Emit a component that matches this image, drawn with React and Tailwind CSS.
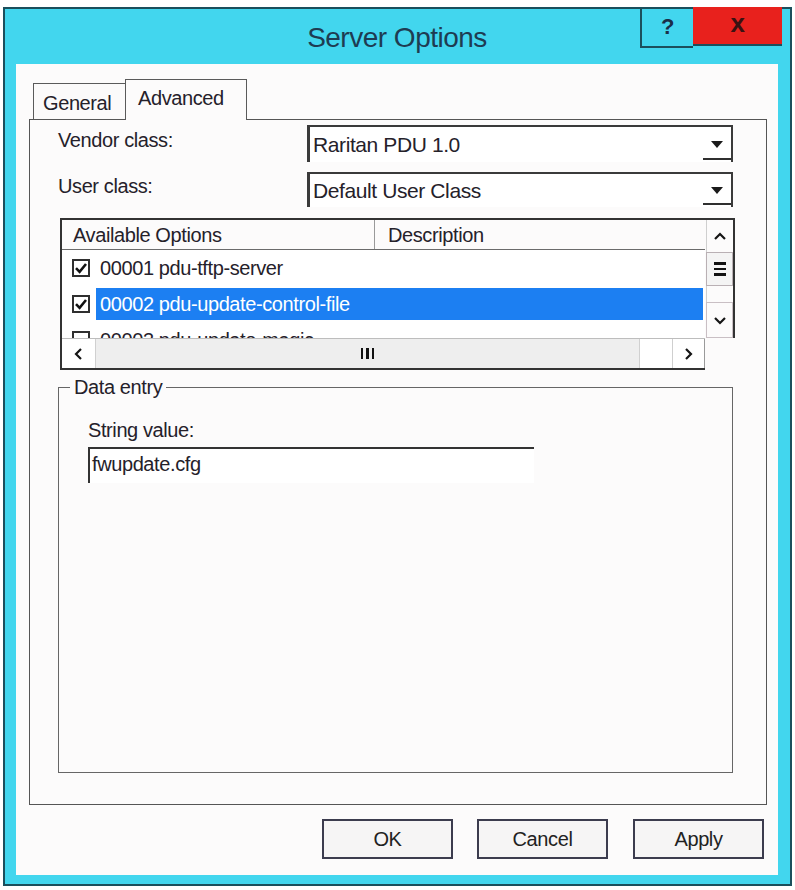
import React from 'react';

const Check = ({ checked }) => (
  <svg width="18" height="18" viewBox="0 0 18 18" className="shrink-0">
    <rect x="1" y="1" width="16" height="16" fill="#fff" stroke="#2f2f2f" strokeWidth="2" />
    {checked && (
      <path d="M4 9.2 L7.6 12.8 L14 5" fill="none" stroke="#111" strokeWidth="2.6" />
    )}
  </svg>
);

const Combo = ({ value, h }) => (
  <div className={`${h} w-[426px] bg-white border-l-[3px] border-t-2 border-r-2 border-[#3a3a3a] flex items-stretch`}>
    <span className="pl-[3px] self-center text-[21px]">{value}</span>
    <div className="ml-auto w-[28px] flex flex-col">
      <div className="flex-1 flex items-center justify-center pt-[4px]">
        <svg width="12" height="7" viewBox="0 0 12 7">
          <polygon points="0,0 12,0 6,7" fill="#1a1a1a" />
        </svg>
      </div>
      <div className="h-[2px] bg-[#2f2f2f] mb-[2px]" />
    </div>
  </div>
);

const Chevron = ({ dir }) => {
  const d = {
    up: 'M2 8 L7 3 L12 8',
    down: 'M2 3 L7 8 L12 3',
    left: 'M8 2 L3 7 L8 12',
    right: 'M3 2 L8 7 L3 12',
  }[dir];
  const vert = dir === 'up' || dir === 'down';
  return (
    <svg width={vert ? 14 : 11} height={vert ? 11 : 14} viewBox={vert ? '0 0 14 11' : '0 0 11 14'}>
      <path d={d} fill="none" stroke="#151515" strokeWidth="2.2" />
    </svg>
  );
};

const OptionsList = () => (
  <div className="ml-[2px] mt-[11px] w-[675px] h-[152px] border-l-2 border-t-2 border-[#333] flex flex-col">
    <div className="flex h-[118px]">
      <div className="w-[643px] flex flex-col">
        {/* header */}
        <div className="h-[30px] flex border-b border-[#6b6b6b] shrink-0">
          <div className="w-[313px] border-r border-[#9a9a9a] pl-[11px] flex items-center">Available Options</div>
          <div className="pl-[13px] flex items-center">Description</div>
        </div>
        {/* rows */}
        <div className="flex-1 overflow-hidden bg-white">
          <div className="h-[36px] flex items-center pl-[10px]">
            <Check checked />
            <span className="ml-[10px]">00001 pdu-tftp-server</span>
          </div>
          <div className="h-[36px] flex items-center pl-[10px]">
            <Check checked />
            <div className="ml-[6px] mr-[2px] flex-1 h-[32px] bg-[#1c7ff2] text-white pl-[4px] flex items-center">
              00002 pdu-update-control-file
            </div>
          </div>
          <div className="h-[36px] flex items-center pl-[10px]">
            <Check />
            <span className="ml-[10px]">00003 pdu-update-magic</span>
          </div>
        </div>
      </div>
      {/* vertical scrollbar */}
      <div className="w-[30px] border-r-2 border-[#333] flex flex-col pl-[1px]">
        <div className="h-[32px] border-l border-[#cfcfcf] flex items-center justify-center">
          <Chevron dir="up" />
        </div>
        <div className="h-[34px] border border-[#b9b0b4] bg-[#f4f4f4] flex flex-col items-center justify-center gap-[3px]">
          <div className="w-[12px] h-[2.5px] bg-[#111]" />
          <div className="w-[12px] h-[2.5px] bg-[#111]" />
          <div className="w-[12px] h-[2.5px] bg-[#111]" />
        </div>
        <div className="h-[16px] border-l border-[#cfcfcf]" />
        <div className="flex-1 border border-[#c9bfc4] flex items-center justify-center">
          <Chevron dir="down" />
        </div>
      </div>
    </div>
    {/* horizontal scrollbar */}
    <div className="flex h-[32px]">
      <div className="w-[643px] flex border-t border-b-2 border-t-[#bdbdbd] border-b-[#333]">
        <div className="w-[33px] flex items-center justify-center bg-white">
          <Chevron dir="left" />
        </div>
        <div className="w-[545px] bg-[#eeeeee] border-x border-[#d0d0d0] flex items-center justify-center">
          <div className="flex gap-[3px]">
            <div className="w-[2.5px] h-[11px] bg-[#111]" />
            <div className="w-[2.5px] h-[11px] bg-[#111]" />
            <div className="w-[2.5px] h-[11px] bg-[#111]" />
          </div>
        </div>
        <div className="w-[33px] bg-white border-r border-[#cfcfcf]" />
        <div className="flex-1 flex items-center justify-center bg-white border-r border-[#9a9a9a]">
          <Chevron dir="right" />
        </div>
      </div>
    </div>
  </div>
);

const DialogButton = ({ children }) => (
  <button className="w-[131px] h-[40px] border-2 border-[#3c3c4e] bg-[#f6f5f5] flex items-center justify-center text-[#222]">
    {children}
  </button>
);

export default function App() {
  return (
    <div
      className="w-[795px] h-[890px] bg-white pt-[7px] pl-[3px] text-[20px] tracking-[-0.4px] text-[#25212a]"
      style={{ fontFamily: '"Liberation Sans", Arial, sans-serif' }}
    >
      <div className="w-[789px] h-[879px] border-2 border-[#1b4f5c] bg-[#42d6ee] flex flex-col pl-[11px] pr-[12px] pb-[9px]">
        {/* title bar */}
        <div className="h-[55px] shrink-0 grid grid-cols-[1fr_auto_1fr]">
          <div />
          <div className="flex items-center pt-[3px] text-[28px] tracking-[-0.5px] text-[#1e3c52]">Server Options</div>
          <div className="flex justify-end items-start -mt-[2px] -mr-[4px]">
            <div className="w-[53px] h-[41px] border-l-2 border-b-2 border-[#1b4f5c] flex items-center justify-center text-[22px] font-bold text-[#1a2f48]">
              ?
            </div>
            <div className="w-[89px] h-[39px] bg-[#e8211d] border-b-2 border-[#1b4f5c] flex items-center justify-center text-[26px] font-bold text-[#3a1212] pb-[4px]">
              x
            </div>
          </div>
        </div>

        {/* content */}
        <div className="flex-1 bg-[#fcfbfb] flex flex-col pt-[15px] pl-[13px] pr-[11px]">
          {/* tabs */}
          <div className="h-[40px] flex items-end pl-[4px] shrink-0">
            <div className="w-[92px] h-[36px] border-l border-t border-[#5a5a5a] flex items-center pl-[9px] pt-[2px] bg-[#fbfafa]">
              General
            </div>
            <div className="relative z-10 w-[122px] h-[41px] -mb-px border-l border-t border-r border-[#5a5a5a] bg-[#fcfbfb] flex items-start pl-[12px] pt-[3px]">
              Advanced
            </div>
          </div>

          {/* tab panel */}
          <div className="h-[686px] border border-[#555] pl-[28px] flex flex-col shrink-0">
            <div className="mt-[5px] flex items-center">
              <div className="w-[249px] -mt-[7px]">Vendor class:</div>
              <Combo value="Raritan PDU 1.0" h="h-[37px]" />
            </div>
            <div className="mt-[10px] flex items-center">
              <div className="w-[249px] -mt-[8px]">User class:</div>
              <Combo value="Default User Class" h="h-[35px]" />
            </div>

            <OptionsList />

            <fieldset className="mt-[5px] w-[675px] h-[398px] border border-[#666] pl-[29px]">
              <legend className="ml-[-18px] px-[4px] leading-[24px]">Data entry</legend>
              <div className="mt-[19px] leading-[24px]">String value:</div>
              <div className="mt-[5px] w-[446px] h-[36px] border-l-2 border-t-2 border-[#333] bg-white flex items-center pl-[2px] pb-[4px]">
                fwupdate.cfg
              </div>
            </fieldset>
          </div>

          {/* buttons */}
          <div className="mt-[14px] flex justify-end pr-[3px] gap-[24px]">
            <DialogButton>OK</DialogButton>
            <div className="flex gap-[25px]">
              <DialogButton>Cancel</DialogButton>
              <DialogButton>Apply</DialogButton>
            </div>
          </div>
        </div>
      </div>
    </div>
  );
}
